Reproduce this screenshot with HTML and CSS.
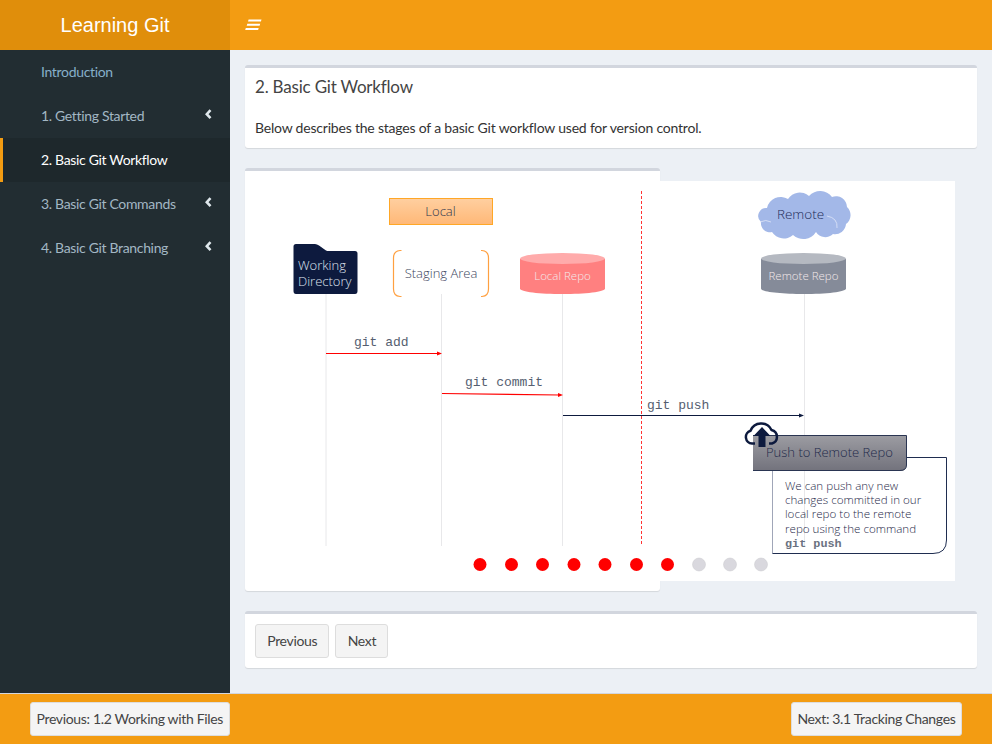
FILE: index.html
```html
<!DOCTYPE html>
<html lang="en">
<head>
<meta charset="utf-8">
<title>Learning Git</title>
<link rel="stylesheet" href="styles.css">
</head>
<body>
<header class="topbar">
  <div class="logo">Learning Git</div>
  <div class="topnav">
    <svg class="burger" width="17" height="12" viewBox="0 0 17 12"><path d="M3.600 0.500H16.500L15.900 2.500H3ZM2.300 4.800H15.200L14.600 6.800H1.700ZM0.800 9H13.700L13.100 11H0.200Z" fill="#fff"/></svg>
  </div>
</header>
<div class="layout">
  <nav class="sidebar">
    <a class="item item-intro">Introduction</a>
    <a class="item">1. Getting Started<svg class="chev" width="7" height="11" viewBox="0 0 7 11"><path d="M5.500 1.200 1.800 5.200 5.500 9.200" fill="none" stroke="#dfe7ec" stroke-width="2.600"/></svg></a>
    <a class="item item-active">2. Basic Git Workflow</a>
    <a class="item">3. Basic Git Commands<svg class="chev" width="7" height="11" viewBox="0 0 7 11"><path d="M5.500 1.200 1.800 5.200 5.500 9.200" fill="none" stroke="#dfe7ec" stroke-width="2.600"/></svg></a>
    <a class="item">4. Basic Git Branching<svg class="chev" width="7" height="11" viewBox="0 0 7 11"><path d="M5.500 1.200 1.800 5.200 5.500 9.200" fill="none" stroke="#dfe7ec" stroke-width="2.600"/></svg></a>
  </nav>
  <main class="content">
    <section class="box">
      <h3 class="box-title">2. Basic Git Workflow</h3>
      <p class="box-body">Below describes the stages of a basic Git workflow used for version control.</p>
    </section>
    <section class="box box-diagram">
      <svg class="diagram" width="710" height="400" viewBox="245 181 710 400">
        <defs>
          <linearGradient id="localGrad" x1="0" y1="0" x2="0" y2="1"><stop offset="0" stop-color="#ffcfa0"/><stop offset="1" stop-color="#ffb877"/></linearGradient>
          <linearGradient id="pushGrad" x1="0" y1="0" x2="0" y2="1"><stop offset="0" stop-color="#9c9ca2"/><stop offset="1" stop-color="#72727c"/></linearGradient>
        </defs>
        <rect x="245" y="181" width="710" height="400" fill="#fff"/>

        <path class="life" d="M326 294V546M441.500 294V546M562.500 294V546M804.500 294V546"/>
        <path class="divider" d="M641.500 191V546"/>

        <rect x="389.500" y="198.500" width="103" height="26" fill="url(#localGrad)" stroke="#ffa726"/>
        <text class="t t-dark" x="440.500" y="216" text-anchor="middle">Local</text>

        <path d="M296 244H315Q317 244 319 245.500L326 250.500Q327 251 329 251H355Q357.500 251 357.500 253.500V291Q357.500 294 355 294H296Q293.500 294 293.500 291V246.500Q293.500 244 296 244Z" fill="#0d1a3e"/>
        <text class="t t-light" x="298" y="270">Working</text>
        <text class="t t-light" x="298" y="286">Directory</text>

        <path d="M401.500 250.500H400Q393.500 251 393.500 258V289Q393.500 296 400 296.500H401.500M481 250.500H482Q488.500 251 488.500 258V289Q488.500 296 482 296.500H481" fill="none" stroke="#ffa040" stroke-width="1.200"/>
        <text class="t t-mid" x="441" y="278" text-anchor="middle">Staging Area</text>

        <path d="M520 259V288.500C520 292 540 294 562.500 294S605 292 605 288.500V259Z" fill="#ff8080"/>
        <ellipse cx="562.500" cy="258.500" rx="42.500" ry="5.500" fill="#ffabab"/>
        <text class="t t-small t-pale" x="562.500" y="280" text-anchor="middle">Local Repo</text>

        <path d="M761 259V288.500C761 292 781 294 803.500 294S846 292 846 288.500V259Z" fill="#858b99"/>
        <ellipse cx="803.500" cy="258.500" rx="42.500" ry="5.500" fill="#b5b9c1"/>
        <text class="t t-small t-pale" x="803.500" y="280" text-anchor="middle">Remote Repo</text>

        <path d="M761 222A8 8 0 0 1 767 208A14 14 0 0 1 788 199A14 14 0 0 1 809 196A15 15 0 0 1 832 197A11 11 0 0 1 847 207A11 11 0 0 1 846 224A11 11 0 0 1 833 234A11 11 0 0 1 816 232A15 15 0 0 1 793 235A14 14 0 0 1 772 232A9 9 0 0 1 761 222Z" fill="#a3b8e8"/>
        <path class="cloud-seam" d="M827 216Q838 218 837 228M760 222Q766 219 771 222"/>
        <text class="t t-navy" x="800.500" y="219" text-anchor="middle">Remote</text>

        <path class="arrow-red" d="M326 353.500H439"/>
        <path d="M442 353.500 437 351.500V355.500Z" fill="#f00"/>
        <text class="mono" x="354" y="346">git add</text>

        <path class="arrow-red" d="M442 393.500 560 395"/>
        <path d="M563 395 558 393V397Z" fill="#f00"/>
        <text class="mono" x="465" y="386">git commit</text>

        <path class="arrow-black" d="M563 415.500H801"/>
        <path d="M804 415.500 799 413.500V417.500Z" fill="#0d1a3e"/>
        <text class="mono" x="647" y="409">git push</text>

        <path class="callout-side" d="M772.500 471V553.500"/>
        <path class="callout" d="M907 457.500H946.500V540Q946.500 553.500 933 553.500H772.500"/>
        <text class="t t-note" x="785" y="490">We can push any new</text>
        <text class="t t-note" x="785" y="504">changes committed in our</text>
        <text class="t t-note" x="785" y="518">local repo to the remote</text>
        <text class="t t-note" x="785" y="533">repo using the command</text>
        <text class="mono-note" x="785" y="547">git push</text>

        <path d="M753 435.500H906.500V465Q906.500 471 900 471H753Z" fill="url(#pushGrad)"/>
        <path class="push-edge" d="M753 435.500H906.500V465Q906.500 470.500 900 470.500H753"/>
        <text class="t t-push" x="766" y="457">Push to Remote Repo</text>

        <path class="cloud-icon" d="M755 443.500H752A6.500 6.500 0 0 1 750.500 430.800A11.500 11.500 0 0 1 771.500 430A7 7 0 0 1 772 443.500H769"/>
        <path d="M762 427 770.500 436H765.500V447H758.500V436H753.500Z" fill="#0d1a3e"/>

        <g class="dot-on">
          <circle cx="480" cy="564.500" r="6.500"/><circle cx="511.500" cy="564.500" r="6.500"/><circle cx="542.500" cy="564.500" r="6.500"/><circle cx="574" cy="564.500" r="6.500"/><circle cx="605" cy="564.500" r="6.500"/><circle cx="636.500" cy="564.500" r="6.500"/><circle cx="667.500" cy="564.500" r="6.500"/>
        </g>
        <g class="dot-off">
          <circle cx="699" cy="564.500" r="6.500"/><circle cx="730" cy="564.500" r="6.500"/><circle cx="761" cy="564.500" r="6.500"/>
        </g>
      </svg>
    </section>
    <section class="box box-pager">
      <button class="btn">Previous</button>
      <button class="btn">Next</button>
    </section>
  </main>
</div>
<footer class="footer">
  <button class="btn btn-footer">Previous: 1.2 Working with Files</button>
  <button class="btn btn-footer">Next: 3.1 Tracking Changes</button>
</footer>
</body>
</html>
```
FILE: styles.css
```css
* { box-sizing: border-box; }
html, body { height: 100%; }
body {
  margin: 0;
  height: 744px;
  overflow: hidden;
  display: flex;
  flex-direction: column;
  font-family: "Lato", "Liberation Sans", sans-serif;
  font-size: 14px;
  line-height: 20px;
  color: #333;
  background: #ecf0f5;
}
.topbar { display: flex; height: 50px; flex: none; background: #f39c12; }
.logo {
  width: 230px;
  background: #e08e0b;
  color: #fff;
  font-family: "Liberation Sans", Arial, sans-serif;
  font-size: 20px;
  line-height: 50px;
  text-align: center;
}
.topnav { display: flex; align-items: center; padding-left: 15px; }
.burger { display: block; }
.layout { flex: 1; display: flex; min-height: 0; }
.sidebar { width: 230px; flex: none; background: #222d32; }
.item {
  display: flex;
  align-items: center;
  justify-content: space-between;
  height: 44px;
  padding: 0 18px 0 41px;
  color: #a3b7c4;
  letter-spacing: -.33px;
}
.item-intro { color: #86afc9; }
.item-active {
  background: #1e282c;
  color: #fff;
  border-left: 3px solid #f39c12;
  padding-left: 38px;
}
.chev { display: block; margin-top: -4px; }
.content { flex: 1; padding: 15px; min-width: 0; }
.box {
  background: #fff;
  border-top: 3px solid #d2d6de;
  border-radius: 3px;
  box-shadow: 0 1px 1px rgba(0, 0, 0, .1);
  margin-bottom: 20px;
}
.box-title {
  margin: 0;
  padding: 9px 10px 11px;
  font-size: 17px;
  line-height: 20px;
  font-weight: 400;
  color: #444;
  letter-spacing: -.2px;
}
.box-body { margin: 0; padding: 10px; letter-spacing: -.2px; }
.box-diagram { width: 415px; padding: 10px 0; }
.diagram { display: block; overflow: visible; }
.box-pager { display: flex; gap: 6px; padding: 10px; }
.btn {
  height: 34px;
  padding: 0 11.200px;
  font: inherit;
  letter-spacing: -.33px;
  color: #444;
  background: #f4f4f4;
  border: 1px solid #ddd;
  border-radius: 3px;
}
.btn-footer { padding: 0 5.500px; }
.footer {
  flex: none;
  height: 51px;
  display: flex;
  justify-content: space-between;
  padding: 8px 30px 0;
  background: #f39c12;
  border-top: 1px solid #d2d6de;
}
.t { font-family: "Open Sans", sans-serif; font-size: 13px; font-weight: 300; }
.t-dark { fill: #2f3850; }
.t-light { fill: #dfe3ee; }
.t-mid { fill: #3d4660; font-size: 13px; }
.t-small { font-size: 11.500px; }
.t-pale { fill: #f3e9e9; }
.t-navy { fill: #1f2d5a; font-size: 13.500px; }
.t-note { fill: #1f2a4a; font-size: 11.600px; }
.t-push { fill: #1f2a4a; font-size: 13px; }
.mono { font-family: "Liberation Mono", monospace; font-size: 13px; fill: #555e70; }
.mono-note { font-family: "Liberation Mono", monospace; font-size: 11.800px; font-weight: 700; fill: #6a7180; }
.life { stroke: #e8e8ea; stroke-width: 1; fill: none; }
.divider { stroke: #f33; stroke-width: 1; stroke-dasharray: 3 2; fill: none; }
.arrow-red { stroke: #f00; stroke-width: 1.200; fill: none; }
.arrow-black { stroke: #0d1a3e; stroke-width: 1.200; fill: none; }
.callout { stroke: #1f2d50; stroke-width: 1; fill: none; }
.callout-side { stroke: #a0a6b8; stroke-width: 1; fill: none; }
.push-edge { stroke: #2a3552; stroke-width: 1; fill: none; }
.cloud-icon { stroke: #0d1a3e; stroke-width: 2.500; fill: none; }
.cloud-seam { stroke: #dfe6f7; stroke-width: .8; fill: none; }
.dot-on { fill: #f00; }
.dot-off { fill: #d9d8de; stroke: #c8c8cc; stroke-width: .5; }
```
